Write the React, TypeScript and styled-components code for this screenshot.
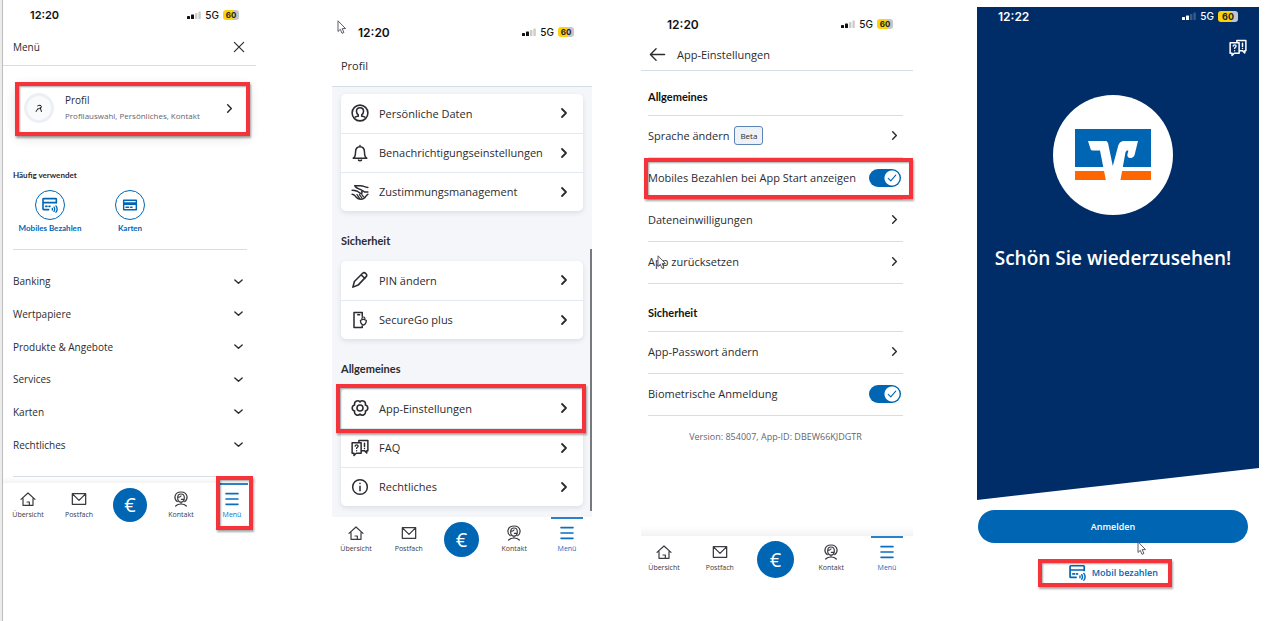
import React from "react";
import styled, { createGlobalStyle, css } from "styled-components";

const blue = "#0066b3";
const ink = "#2b2b30";
const rule = "#d5dee8";
const alarm = "#f5333a";
const boldFont = 'Lato, "Open Sans", sans-serif';

const GlobalStyle = createGlobalStyle`
  *, *::before, *::after { box-sizing: border-box; }
  body {
    margin: 0;
    background: #fff;
    color: ${ink};
    font-family: "Open Sans", "Noto Sans", sans-serif;
  }
  button, input { font: inherit; color: inherit; }
  button { border: 0; padding: 0; background: none; cursor: pointer; }
  h1, h2, p, ul { margin: 0; padding: 0; }
  ul { list-style: none; }
  svg { display: block; flex: none; }
`;

/* ---------- page ---------- */

const Page = styled.main`
  display: flex;
  align-items: flex-start;
  min-height: 100vh;
  padding-right: 21px;
`;

const Edge = styled.div`
  flex: none;
  align-self: stretch;
  width: 3px;
  background: #ececec;
  border-right: 1px solid #bdbdbd;
`;

const Screen = styled.section<{ $grow: number; $gap?: number; $top?: number }>`
  position: relative;
  flex: ${(p) => p.$grow} 1 0;
  min-width: 0;
  margin-left: ${(p) => p.$gap ?? 0}px;
  padding-top: ${(p) => p.$top ?? 0}px;
`;

/* ---------- status bar ---------- */

const StatusRow = styled.div<{ $left: number; $right: number; $light?: boolean; $size: number }>`
  display: flex;
  align-items: center;
  justify-content: space-between;
  height: 30px;
  padding: 0 ${(p) => p.$right}px 0 ${(p) => p.$left}px;
  color: ${(p) => (p.$light ? "#fff" : "#111")};
  font-family: Inter, sans-serif;
  font-size: ${(p) => p.$size}px;
  font-weight: 600;
`;

const StatusRight = styled.div`
  display: flex;
  align-items: center;
  gap: 4px;
`;

const Network = styled.span`
  font-size: 10px;
  font-weight: 500;
`;

const Battery = styled.span<{ $large?: boolean }>`
  width: ${(p) => (p.$large ? 20 : 16)}px;
  height: ${(p) => (p.$large ? 11 : 10)}px;
  border-radius: 3px;
  background: linear-gradient(90deg, #fcd20a 65%, #c4c6ca 65%);
  color: #222;
  font-size: ${(p) => (p.$large ? 9 : 8)}px;
  font-weight: 700;
  line-height: ${(p) => (p.$large ? 11 : 10)}px;
  text-align: center;
`;

function Status(props: { time: string; left: number; right: number; light?: boolean; size?: number }) {
  return (
    <StatusRow $left={props.left} $right={props.right} $light={props.light} $size={props.size ?? 12}>
      <span>{props.time}</span>
      <StatusRight>
        <svg width="14" height="9" viewBox="0 0 14 9" fill="currentColor">
          <rect x="0" y="5" width="3" height="3" rx="0.6" />
          <rect x="4" y="3.6" width="3" height="4.4" rx="0.6" />
          <rect x="8" y="2" width="2.4" height="6" rx="0.6" opacity="0.22" />
          <rect x="11.4" y="0.4" width="2.4" height="7.6" rx="0.6" opacity="0.22" />
        </svg>
        <Network>5G</Network>
        <Battery $large={props.light}>60</Battery>
      </StatusRight>
    </StatusRow>
  );
}

/* ---------- icons ---------- */

type IconProps = { size?: number; weight?: number };

function Icon({ size = 16, weight = 1.8, children }: IconProps & { children: React.ReactNode }) {
  return (
    <svg
      width={size}
      height={size}
      viewBox="0 0 24 24"
      fill="none"
      stroke="currentColor"
      strokeWidth={weight}
      strokeLinecap="round"
      strokeLinejoin="round"
      aria-hidden="true"
    >
      {children}
    </svg>
  );
}

const ChevronRight = ({ size = 12, weight = 3.6 }: IconProps) => (
  <Icon size={size} weight={weight}>
    <path d="M8 4l8 8-8 8" />
  </Icon>
);
const ChevronDown = () => (
  <Icon size={11} weight={3}>
    <path d="M4 8.500l8 7.500 8-7.500" />
  </Icon>
);
const CloseIcon = () => (
  <Icon size={14} weight={2}>
    <path d="M4 4l16 16M20 4L4 20" />
  </Icon>
);
const BackIcon = () => (
  <Icon size={17} weight={1.9}>
    <path d="M22 12H3M10 4l-8 8 8 8" />
  </Icon>
);
const HomeIcon = () => (
  <Icon size={16} weight={1.8}>
    <path d="M1.500 12.500L12 3l10.500 9.500M4.500 11.500V21.500h15V11.500M14 21.500v-5h-3.500" />
  </Icon>
);
const MailIcon = () => (
  <Icon size={16} weight={1.9}>
    <path d="M2 4h20v16H2zM3 5l9 9 9-9" />
  </Icon>
);
const ContactIcon = () => (
  <Icon size={16} weight={1.8}>
    <path d="M6.500 16C3.500 14 2.500 11 3 8c.8-4 4.500-6.500 9-6.500S20.200 4 21 8c.5 3-.5 6-3.500 8" />
    <path d="M12 16.500c-3 0-5-3-5-6.500s2-5.500 5-5.500 5 2 5 5.500-2 6.500-5 6.500zM7 9.500c2.500 0 4-.5 5-2M12.500 12.500H17M12 16.500v3M4 22.500c2-2.300 5-3 8-3s6 .7 8 3" />
  </Icon>
);
const MenuIcon = () => (
  <Icon size={16} weight={2.4}>
    <path d="M3 4h18M3 12h18M3 20h18" />
  </Icon>
);
const PersonIcon = () => (
  <Icon size={18} weight={2.1}>
    <circle cx="12" cy="12" r="10.500" />
    <path d="M5.500 17.500c1.200-.8 2.700-1 4.200-1.300V14.500C8 13 7.300 11.500 7.300 9.500 7.300 6.700 9.200 5 12 5s4.700 1.700 4.700 4.500c0 2-.7 3.500-2.400 5v1.700c1.500.3 3 .5 4.200 1.300" />
  </Icon>
);
const BellIcon = () => (
  <Icon size={18} weight={2}>
    <path d="M3 19c2.500-1.500 3-4 3-8 0-4.500 2.500-7.500 6-7.500s6 3 6 7.500c0 4 .5 6.500 3 8zM12 3.500V2M10 21.500c1 1 3 1 4 0" />
  </Icon>
);
const HandshakeIcon = () => (
  <Icon size={18} weight={2}>
    <path d="M5 3.500h8c3 0 5 2 9.500 2.500M5 3.500c.5 2.500 3.500 3.500 6 4.500 3 1 5 2.500 7.500 4h4M1.500 9.500c3 0 4.500.5 7 1.500l4 2.800c1.600.9 2.800-.7 1.800-2.200" />
    <path d="M1.500 15c2.500.3 3.500 1.300 4.500 2.800 2 2.700 4 4 7 4 3.300 0 5.500-1.600 7-4.500l2.500-2.300" />
    <path d="M8 15.500l3.500 5M11.300 15.500l3.200 4.500M14.500 15.500l2.200 3" strokeWidth="1.700" />
  </Icon>
);
const PencilIcon = () => (
  <Icon size={18} weight={2.1}>
    <path d="M2.500 21.500l2-7.500L15.500 3c1.200-1 2.800-1 4.200.3s1.600 3 .5 4.200L9.500 18.800zM13.500 5l5 5" />
  </Icon>
);
const SecureIcon = () => (
  <Icon size={18} weight={2}>
    <path d="M15 7V2H4v20h11v-2M9 5h2.500" />
    <path d="M16.500 11l4 1.500c0 3-1 5-4 6.500-3-1.500-4-3.500-4-6.500zM14.500 11.500V10c0-2.700 4-2.700 4 0v1.500" strokeWidth="1.600" />
  </Icon>
);
const GearIcon = () => (
  <Icon size={18} weight={2.1}>
    <path d="M12 3.800A4.200 4.200 0 0 1 19.100 7.900A4.200 4.200 0 0 1 19.100 16.100A4.200 4.200 0 0 1 12 20.200A4.200 4.200 0 0 1 4.900 16.100A4.200 4.200 0 0 1 4.900 7.900A4.200 4.200 0 0 1 12 3.800z" />
    <circle cx="12" cy="12" r="4" />
  </Icon>
);
const FaqIcon = ({ size = 18 }: IconProps) => (
  <Icon size={size} weight={2}>
    <path d="M1.500 5h12v14H7l-3 3v-3H1.500zM10.500 5V2h12v13.500H21v3L18 15.500h-4.500M18 5.500V10M18 12.500v.2" />
    <path d="M5.500 9.500c.2-2.200 4-2.200 4 0 0 1.500-2 1.500-2 3M7.500 15.500v.2" strokeWidth="1.800" />
  </Icon>
);
const InfoIcon = () => (
  <Icon size={18} weight={2}>
    <circle cx="12" cy="12" r="9.800" />
    <path d="M12 11v6M12 7v.3" />
  </Icon>
);
const PayIcon = ({ size = 17 }: IconProps) => (
  <Icon size={size} weight={2.4}>
    <path d="M21.500 9V3.500a1 1 0 0 0-1-1H2.500a1 1 0 0 0-1 1V18a1 1 0 0 0 1 1H10M1.500 8.500h20M5.500 14h2M10.500 14h1.500" />
    <path d="M15.500 17v2.500M18 15c1.200 2 1.200 4.500 0 6.500M21 13.300c2 3 2 7 0 9.500" strokeWidth="2" />
  </Icon>
);
const CardIcon = () => (
  <Icon size={16} weight={2.2}>
    <path d="M2.500 5h19v14h-19zM2.500 9h19M2.500 11h19M6 15.500h4M13 15.500h2" />
  </Icon>
);
const SmallSignature = () => (
  <Icon size={9} weight={2.600}>
    <path d="M7 5c4-3 10-2 10 2 0 3-3 5-7 6M14 9l3 11M3 20l5-8" />
  </Icon>
);

const Pointer = styled.svg<{ $x: string; $y: string }>`
  position: absolute;
  left: ${(p) => p.$x};
  top: ${(p) => p.$y};
`;

function Cursor({ x, y }: { x: string; y: string }) {
  return (
    <Pointer $x={x} $y={y} width="10" height="14" viewBox="0 0 10 14" aria-hidden="true">
      <path
        d="M1 .8v10.700l2.300-2.200 1.700 4 1.900-.8-1.700-3.900h3.300z"
        fill="#fff"
        stroke="#4a4a55"
        strokeWidth="0.9"
      />
    </Pointer>
  );
}

/* ---------- shared parts ---------- */

const Marker = styled.span<{ $inset: string }>`
  position: absolute;
  inset: ${(p) => p.$inset};
  border: 4px solid ${alarm};
  box-shadow: 1px 2px 2px rgba(0, 0, 0, 0.35), inset 1px 1px 2px rgba(0, 0, 0, 0.35);
  pointer-events: none;
`;

const AppBar = styled.header<{ $height: number; $pad: string }>`
  display: flex;
  align-items: center;
  gap: 11px;
  height: ${(p) => p.$height}px;
  padding: ${(p) => p.$pad};
  border-bottom: 1px solid ${rule};
`;

const BarTitle = styled.h1<{ $small?: boolean }>`
  flex: 1;
  font-size: ${(p) => (p.$small ? 10 : 11)}px;
  font-weight: 400;
  line-height: 16px;
`;

const NavBar = styled.nav<{ $pad: string }>`
  display: flex;
  justify-content: space-between;
  height: 48px;
  padding: ${(p) => p.$pad};
  background: #fff;
  font-size: 7px;
`;

const NavItem = styled.button<{ $active?: boolean }>`
  position: relative;
  display: flex;
  flex-direction: column;
  align-items: center;
  gap: 2px;
  width: 40px;
  padding-top: 8px;
  color: ${(p) => (p.$active ? "#0a6fc2" : "#3a3a40")};
  line-height: 12px;
  white-space: nowrap;
  ${(p) =>
    p.$active &&
    css`
      &::before {
        content: "";
        position: absolute;
        top: 0;
        left: 4px;
        right: 4px;
        height: 2px;
        background: #2c7fcb;
      }
    `}
`;

const NavCenter = styled.div`
  display: flex;
  justify-content: center;
  width: 40px;
`;

const EuroButton = styled.button<{ $size: number }>`
  display: grid;
  place-items: center;
  width: ${(p) => p.$size}px;
  height: ${(p) => p.$size}px;
  margin-top: 5px;
  border-radius: 50%;
  background: ${blue};
  color: #fff;
  font-size: 20px;
  line-height: 24px;
`;

function BottomNav({ pad, euro, marked }: { pad: string; euro: number; marked?: boolean }) {
  return (
    <NavBar $pad={pad}>
      <NavItem><HomeIcon />Übersicht</NavItem>
      <NavItem><MailIcon />Postfach</NavItem>
      <NavCenter><EuroButton $size={euro}>€</EuroButton></NavCenter>
      <NavItem><ContactIcon />Kontakt</NavItem>
      <NavItem $active>
        <MenuIcon />Menü
        {marked && <Marker $inset="-7px -1px 1px 4px" />}
      </NavItem>
    </NavBar>
  );
}

/* ---------- menu screen ---------- */

const IconButton = styled.button`
  display: grid;
  place-items: center;
`;

const ProfileCard = styled.button`
  position: relative;
  display: flex;
  align-items: center;
  gap: 11px;
  width: calc(100% - 22px);
  height: 50px;
  margin: 19px 8px 33px 14px;
  padding: 0 13px 4px 7px;
  background: #fff;
  box-shadow: 0 2px 12px rgba(0, 0, 0, 0.14);
  text-align: left;
`;

const Avatar = styled.span`
  display: grid;
  place-items: center;
  width: 30px;
  height: 30px;
  border: 3px solid #eceff3;
  border-radius: 50%;
  background: #f9fafb;
  color: #111;
`;

const ProfileText = styled.span`
  flex: 1;
  display: flex;
  flex-direction: column;
  font-size: 10px;
  line-height: 16px;
`;

const ProfileHint = styled.small`
  color: #66666c;
  font-size: 8px;
  white-space: nowrap;
`;

const QuickTitle = styled.h2`
  padding-left: 10px;
  font-family: ${boldFont};
  font-size: 8px;
  font-weight: 700;
  line-height: 14px;
`;

const QuickRow = styled.div`
  display: flex;
  gap: 10px;
  margin: 0 9px 0 10px;
  padding: 8px 0 14px 2px;
  border-bottom: 1px solid ${rule};
`;

const QuickItem = styled.button`
  display: flex;
  flex-direction: column;
  align-items: center;
  gap: 1px;
  width: 70px;
  color: ${blue};
  font-family: ${boldFont};
  font-size: 8px;
  font-weight: 700;
  line-height: 14px;
  white-space: nowrap;
`;

const QuickCircle = styled.span`
  display: grid;
  place-items: center;
  width: 30px;
  height: 30px;
  border: 1px solid ${blue};
  border-radius: 50%;
`;

const Sections = styled.ul`
  display: grid;
  grid-auto-rows: 1fr;
  height: 227px;
  margin: 0 9px 0 10px;
  padding: 15px 0;
  border-bottom: 1px solid ${rule};
`;

const SectionButton = styled.button`
  display: flex;
  align-items: center;
  justify-content: space-between;
  width: 100%;
  height: 100%;
  padding-right: 3px;
  font-size: 10px;
`;

const FadeUp = styled.div<{ $height: number }>`
  height: ${(p) => p.$height}px;
  background: linear-gradient(#fff, #f3f3f4);
`;

function MenuScreen() {
  return (
    <Screen $grow={253}>
      <Status time="12:20" left={27} right={17} size={11} />
      <AppBar $height={36} $pad="0 10px 2px">
        <BarTitle $small>Menü</BarTitle>
        <IconButton aria-label="Schließen"><CloseIcon /></IconButton>
      </AppBar>
      <ProfileCard>
        <Avatar><SmallSignature /></Avatar>
        <ProfileText>
          Profil
          <ProfileHint>Profilauswahl, Persönliches, Kontakt</ProfileHint>
        </ProfileText>
        <ChevronRight size={11} weight={3.2} />
        <Marker $inset="-3px -2px -1px" />
      </ProfileCard>
      <QuickTitle>Häufig verwendet</QuickTitle>
      <QuickRow>
        <QuickItem><QuickCircle><PayIcon size={16} /></QuickCircle>Mobiles Bezahlen</QuickItem>
        <QuickItem><QuickCircle><CardIcon /></QuickCircle>Karten</QuickItem>
      </QuickRow>
      <Sections>
        {["Banking", "Wertpapiere", "Produkte & Angebote", "Services", "Karten", "Rechtliches"].map((name) => (
          <li key={name}>
            <SectionButton>{name}<ChevronDown /></SectionButton>
          </li>
        ))}
      </Sections>
      <FadeUp $height={6} />
      <BottomNav pad="0 4px 0 5px" euro={34} marked />
    </Screen>
  );
}

/* ---------- profile screen ---------- */

const ProfileBody = styled.div`
  position: relative;
  padding: 7px 9px 11px;
  background: #f4f6f9;
`;

const GroupTitle = styled.h2`
  padding: 20px 0 10px;
  font-family: ${boldFont};
  font-size: 11px;
  font-weight: 700;
  line-height: 20px;
`;

const Card = styled.ul`
  position: relative;
  border-radius: 5px;
  background: #fff;
  box-shadow: 0 2px 5px rgba(30, 50, 80, 0.12);
`;

const CardItem = styled.li`
  height: 39px;
  & + & {
    border-top: 1px solid #e3e9f0;
  }
`;

const CardButton = styled.button`
  display: flex;
  align-items: center;
  gap: 10px;
  width: 100%;
  height: 100%;
  padding: 0 13px 1px 10px;
  color: ${ink};
  font-size: 11px;
  white-space: nowrap;
  & > span { flex: 1; text-align: left; }
`;

const ScrollThumb = styled.span`
  position: absolute;
  top: 162px;
  right: 0;
  bottom: 6px;
  width: 2px;
  background: #77797f;
`;

function CardRow({ icon, label, children }: { icon: React.ReactNode; label: string; children?: React.ReactNode }) {
  return (
    <CardItem>
      <CardButton>
        {icon}
        <span>{label}</span>
        <ChevronRight />
      </CardButton>
      {children}
    </CardItem>
  );
}

function ProfileScreen() {
  return (
    <Screen $grow={260} $gap={76} $top={17}>
      <Cursor x="5px" y="20px" />
      <Status time="12:20" left={26} right={18} />
      <AppBar $height={40} $pad="0 9px 2px">
        <BarTitle>Profil</BarTitle>
      </AppBar>
      <ProfileBody>
        <Card>
          <CardRow icon={<PersonIcon />} label="Persönliche Daten" />
          <CardRow icon={<BellIcon />} label="Benachrichtigungseinstellungen" />
          <CardRow icon={<HandshakeIcon />} label="Zustimmungsmanagement" />
        </Card>
        <GroupTitle>Sicherheit</GroupTitle>
        <Card>
          <CardRow icon={<PencilIcon />} label="PIN ändern" />
          <CardRow icon={<SecureIcon />} label="SecureGo plus" />
        </Card>
        <GroupTitle>Allgemeines</GroupTitle>
        <Card>
          <CardRow icon={<GearIcon />} label="App-Einstellungen">
            <Marker $inset="-5px -3px 73px -5px" />
          </CardRow>
          <CardRow icon={<FaqIcon />} label="FAQ" />
          <CardRow icon={<InfoIcon />} label="Rechtliches" />
        </Card>
        <ScrollThumb />
      </ProfileBody>
      <BottomNav pad="0 5px 0 4px" euro={35} />
    </Screen>
  );
}

/* ---------- settings screen ---------- */

const SettingsBody = styled.div`
  height: 455px;
  padding: 0 10px 0 7px;
`;

const SettingsTitle = styled.h2<{ $height: number }>`
  display: flex;
  align-items: flex-end;
  height: ${(p) => p.$height}px;
  padding-bottom: 8px;
  border-bottom: 1px solid ${rule};
  color: #111;
  font-family: ${boldFont};
  font-size: 11px;
  font-weight: 700;
  line-height: 20px;
`;

const SettingRow = styled.div`
  position: relative;
  display: flex;
  align-items: center;
  height: 42px;
  padding-bottom: 2px;
  border-bottom: 1px solid ${rule};
  font-size: 11px;
  white-space: nowrap;
`;

const SettingLink = styled.button`
  display: flex;
  align-items: center;
  gap: 5px;
  width: 100%;
  height: 100%;
  padding-right: 3px;
  & > svg { margin-left: auto; }
`;

const SettingLabel = styled.label`
  flex: 1;
`;

const Beta = styled.span`
  padding: 0 5px;
  border: 1px solid #5b83b5;
  border-radius: 3px;
  background: #eef1f5;
  font-size: 8px;
  line-height: 17px;
`;

const ToggleBox = styled.span`
  position: relative;
  display: block;
  width: 32px;
  height: 18px;
  margin-right: 2px;
  & > svg {
    position: absolute;
    top: 4px;
    right: 4px;
    color: ${blue};
    pointer-events: none;
  }
`;

const ToggleInput = styled.input`
  appearance: none;
  display: block;
  width: 100%;
  height: 100%;
  margin: 0;
  border-radius: 9px;
  background: radial-gradient(circle at 23px 9px, #fff 7px, transparent 8px), ${blue};
`;

const Version = styled.p`
  padding-top: 13px;
  color: #66666c;
  font-size: 9px;
  line-height: 16px;
  text-align: center;
`;

function LinkSetting({ label, beta }: { label: string; beta?: boolean }) {
  return (
    <SettingRow>
      <SettingLink>
        {label}
        {beta && <Beta>Beta</Beta>}
        <ChevronRight size={11} weight={3.2} />
      </SettingLink>
    </SettingRow>
  );
}

function ToggleSetting({ id, label, marked }: { id: string; label: string; marked?: boolean }) {
  return (
    <SettingRow>
      <SettingLabel htmlFor={id}>{label}</SettingLabel>
      <ToggleBox>
        <ToggleInput id={id} type="checkbox" defaultChecked />
        <Icon size={10} weight={2.6}><path d="M3 13l6 6L21 5" /></Icon>
      </ToggleBox>
      {marked && <Marker $inset="0 -10px 0 -4px" />}
    </SettingRow>
  );
}

function SettingsScreen() {
  return (
    <Screen $grow={272} $gap={49} $top={9}>
      <Status time="12:20" left={26} right={20} />
      <AppBar $height={32} $pad="0 8px">
        <IconButton aria-label="Zurück"><BackIcon /></IconButton>
        <BarTitle>App-Einstellungen</BarTitle>
      </AppBar>
      <SettingsBody>
        <SettingsTitle $height={45}>Allgemeines</SettingsTitle>
        <LinkSetting label="Sprache ändern" beta />
        <ToggleSetting id="pay-start" label="Mobiles Bezahlen bei App Start anzeigen" marked />
        <LinkSetting label="Dateneinwilligungen" />
        <LinkSetting label="App zurücksetzen" />
        <SettingsTitle $height={48}>Sicherheit</SettingsTitle>
        <LinkSetting label="App-Passwort ändern" />
        <ToggleSetting id="biometric" label="Biometrische Anmeldung" />
        <Version>Version: 854007, App-ID: DBEW66KJDGTR</Version>
      </SettingsBody>
      <FadeUp $height={10} />
      <BottomNav pad="0 6px 0 3px" euro={37} />
      <Cursor x="16px" y="255px" />
    </Screen>
  );
}

/* ---------- login screen ---------- */

const Hero = styled.div`
  display: flex;
  flex-direction: column;
  align-items: center;
  height: 493px;
  padding-bottom: 32px;
  background: #002d67;
  clip-path: polygon(0 0, 100% 0, 100% calc(100% - 32px), 0 100%);
  color: #fff;
`;

const HeroTop = styled.div`
  align-self: stretch;
  margin-top: -6px;
`;

const HelpRow = styled.div`
  display: flex;
  justify-content: flex-end;
  padding: 8px 12px 0;
`;

const Welcome = styled.div`
  display: flex;
  flex-direction: column;
  align-items: center;
  padding: 38px 10px 0 0;
`;

const LogoDisc = styled.div`
  display: grid;
  place-items: center;
  width: 120px;
  height: 120px;
  border-radius: 50%;
  background: #fff;
`;

const Greeting = styled.h1`
  margin-top: 29px;
  font-size: 19px;
  font-weight: 600;
  line-height: 28px;
  white-space: nowrap;
`;

const Actions = styled.div`
  position: relative;
  display: flex;
  flex-direction: column;
  align-items: center;
  padding: 10px 11px 0 1px;
`;

const LoginButton = styled.button`
  width: 100%;
  height: 33px;
  padding-bottom: 1px;
  border-radius: 17px;
  background: ${blue};
  color: #fff;
  font-size: 9px;
  font-weight: 600;
`;

const PayButton = styled.button`
  position: relative;
  display: flex;
  align-items: center;
  justify-content: flex-end;
  gap: 6px;
  width: 134px;
  height: 28px;
  margin: 16px 16px 0 0;
  padding: 0 14px 2px 0;
  color: ${blue};
  font-size: 9px;
  font-weight: 600;
  white-space: nowrap;
`;

function BankLogo() {
  return (
    <svg width="76" height="52" viewBox="0 0 76 52" role="img" aria-label="Volksbank Raiffeisenbank">
      <path d="M0 0h76v38H0z" fill="#0066b3" />
      <path d="M0 42h76v9H0z" fill="#ff6600" />
      <path
        d="M13 12H31.500L33 14L37.800 37L43 17.500C44.200 13.500 46 12 49.500 12H63l-3.300 13.500c-.6 2.300-2 3.500-4.200 3.500-2.600 0-3.600-1.800-3-4l.9-3.500c-1.900 0-2.600.6-3 2.200L45.300 52H31L25 21.500H18c-1.500 0-2.300-.6-2.600-2z"
        fill="#fff"
      />
    </svg>
  );
}

function LoginScreen() {
  return (
    <Screen $grow={282} $gap={64} $top={7}>
      <Hero>
        <HeroTop>
          <Status time="12:22" left={21} right={21} light />
          <HelpRow>
            <IconButton aria-label="Hilfe"><FaqIcon size={18} /></IconButton>
          </HelpRow>
        </HeroTop>
        <Welcome>
          <LogoDisc><BankLogo /></LogoDisc>
          <Greeting>Schön Sie wiederzusehen!</Greeting>
        </Welcome>
      </Hero>
      <Actions>
        <LoginButton>Anmelden</LoginButton>
        <PayButton>
          <PayIcon size={17} />
          Mobil bezahlen
          <Marker $inset="0" />
        </PayButton>
        <Cursor x="160px" y="41px" />
      </Actions>
    </Screen>
  );
}

export default function App() {
  return (
    <>
      <GlobalStyle />
      <Page>
        <Edge />
        <MenuScreen />
        <ProfileScreen />
        <SettingsScreen />
        <LoginScreen />
      </Page>
    </>
  );
}
